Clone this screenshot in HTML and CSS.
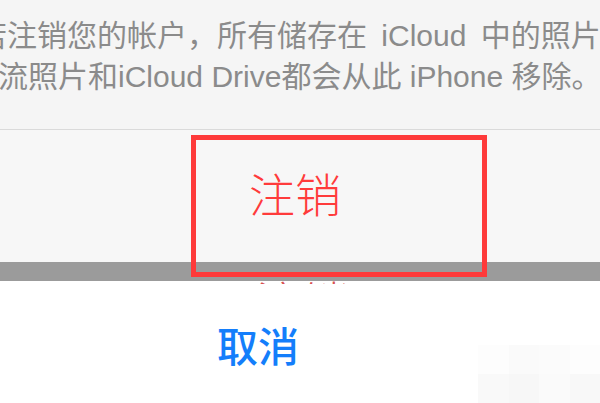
FILE: index.html
```html
<!DOCTYPE html>
<html lang="zh-CN">
<head>
<meta charset="utf-8">
<title>注销</title>
<link rel="stylesheet" href="styles.css">
</head>
<body>
<div class="screen">
  <section class="message">
    <p class="line line-1">若注销您的帐户，所有储存在 iCloud 中的照片</p>
    <p class="line line-2">流照片和iCloud Drive都会从此 iPhone 移除。</p>
  </section>
  <div class="sep"></div>
  <section class="action">
    <span class="signout">注销</span>
    <div class="highlight"></div>
  </section>
  <div class="band"></div>
  <section class="cancel-area">
    <div class="ghost"><span class="ghost-text">注销</span></div>
    <span class="cancel">取消</span>
    <div class="mosaic">
      <i class="m1"></i><i class="m2"></i><i class="m3"></i><i class="m4"></i>
      <i class="m5"></i><i class="m6"></i><i class="m7"></i><i class="m8"></i>
    </div>
  </section>
</div>
</body>
</html>
```
FILE: styles.css
```css
html, body {
  margin: 0;
  padding: 0;
  background: #ffffff;
}
.screen {
  width: 600px;
  height: 403px;
  overflow: hidden;
  position: relative;
  font-family: "Noto Sans CJK SC", "Noto Sans", sans-serif;
}
.message {
  height: 129px;
  background: #f5f5f5;
  padding-top: 15px;
  box-sizing: border-box;
  overflow: hidden;
}
.line {
  margin: 0;
  white-space: nowrap;
  font-family: "Liberation Sans", "Noto Sans CJK SC", sans-serif;
  font-size: 30px;
  line-height: 41px;
  color: #8b8b8b;
}
.line-1 { margin-left: -23px; word-spacing: 6px; }
.line-2 { margin-left: -2px; }
.sep {
  height: 1px;
  background: #dadada;
}
.action {
  position: relative;
  height: 132px;
  background: #f7f7f7;
  box-sizing: border-box;
  padding-left: 249px;
  padding-top: 35px;
}
.signout {
  font-size: 46px;
  line-height: 54px;
  font-weight: 300;
  color: #ff3b3b;
}
.highlight {
  position: absolute;
  left: 191px;
  top: 5px;
  width: 296px;
  height: 142px;
  box-sizing: border-box;
  border: 5px solid #fe3a3a;
  z-index: 2;
}
.band {
  height: 19px;
  background: #9b9b9b;
}
.cancel-area {
  position: relative;
  height: 122px;
  background: #ffffff;
}
.ghost {
  height: 3px;
  overflow: hidden;
  clip-path: inset(0 0 0 0);
  padding-left: 256px;
}
.ghost-text {
  display: inline-block;
  position: relative;
  top: -4px;
  font-size: 46px;
  line-height: 46px;
  font-weight: 300;
  color: #d85050;
  vertical-align: top;
}
.cancel {
  display: block;
  margin-top: 36px;
  padding-left: 217px;
  font-size: 41px;
  line-height: 48px;
  font-weight: 500;
  color: #147efb;
}
.mosaic {
  position: absolute;
  right: 0;
  top: 64px;
  width: 122px;
  height: 58px;
  display: grid;
  grid-template-columns: repeat(4, 1fr);
  grid-template-rows: repeat(2, 1fr);
}
.mosaic i { display: block; }
.m1 { background: #fdfdfd; }
.m2 { background: #fafafa; }
.m3 { background: #fbfbfb; }
.m4 { background: #fdfdfd; }
.m5 { background: #f9f9f9; }
.m6 { background: #f7f7f7; }
.m7 { background: #fafafa; }
.m8 { background: #f8f8f8; }
```
